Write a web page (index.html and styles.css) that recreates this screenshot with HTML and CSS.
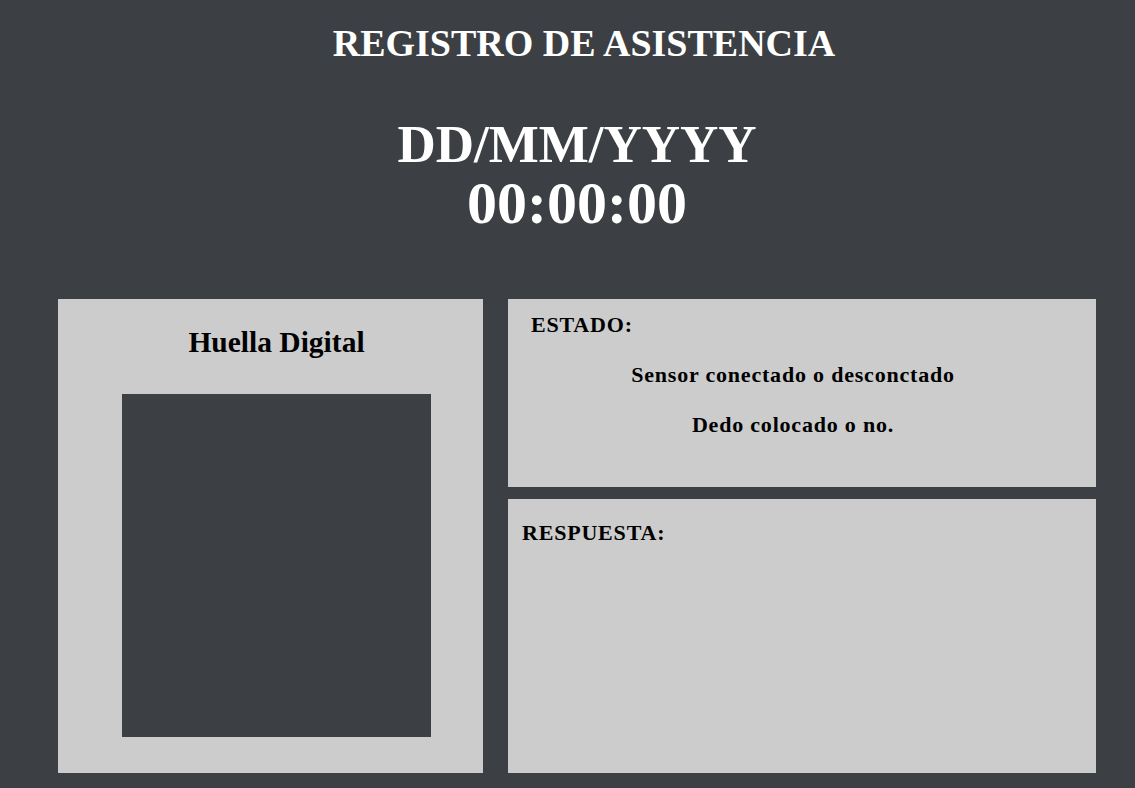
FILE: index.html
```html
<!DOCTYPE html>
<html lang="es">
<head>
<meta charset="utf-8">
<title>Registro de Asistencia</title>
<link rel="stylesheet" href="styles.css">
</head>
<body>
<div class="page">
  <header class="header">
    <h1 class="title">REGISTRO DE ASISTENCIA</h1>
    <div class="clock">
      <div class="date">DD/MM/YYYY</div>
      <div class="time">00:00:00</div>
    </div>
  </header>
  <main class="panels">
    <section class="panel finger">
      <h2 class="finger-title">Huella Digital</h2>
      <div class="finger-box"></div>
    </section>
    <div class="side">
      <section class="panel status">
        <h3 class="label">ESTADO:</h3>
        <p class="status-line">Sensor conectado o desconctado</p>
        <p class="status-line">Dedo colocado o no.</p>
      </section>
      <section class="panel response">
        <h3 class="label">RESPUESTA:</h3>
      </section>
    </div>
  </main>
</div>
</body>
</html>
```

FILE: styles.css
```css
html, body {
  margin: 0;
  padding: 0;
  background: #3c3f43;
}

body {
  font-family: "Liberation Serif", "Times New Roman", serif;
  color: #000;
  width: 1135px;
  height: 788px;
  overflow: hidden;
}

.page {
  padding: 0 39px 0 58px;
}

.header {
  text-align: center;
  color: #fff;
}

.title {
  margin: 21px 0 0;
  padding-left: 14px;
  font-size: 38px;
  line-height: 44px;
  font-weight: bold;
}

.clock {
  margin-top: 48px;
  font-weight: bold;
}

.date {
  font-size: 53px;
  line-height: 62px;
}

.time {
  font-size: 60px;
  line-height: 56px;
}

.panels {
  margin-top: 68px;
  display: flex;
  gap: 25px;
  height: 474px;
}

.panel {
  background: #cccccc;
  box-sizing: border-box;
}

.finger {
  width: 425px;
  padding: 26px 52px 36px 64px;
  display: flex;
  flex-direction: column;
  align-items: center;
}

.finger-title {
  margin: 0;
  font-size: 29.5px;
  line-height: 34px;
  font-weight: bold;
}

.finger-box {
  margin-top: 35px;
  width: 309px;
  flex: 1;
  background: #3c3f43;
}

.side {
  width: 588px;
  display: flex;
  flex-direction: column;
  gap: 12px;
}

.label {
  margin: 0;
  font-size: 22px;
  line-height: 26px;
  font-weight: bold;
  letter-spacing: 0.8px;
}

.status {
  height: 188px;
  padding: 13px 41px 0 23px;
}

.status-line {
  margin: 24px 0 0;
  text-align: center;
  font-size: 22px;
  line-height: 26px;
  font-weight: bold;
  letter-spacing: 0.8px;
}

.response {
  flex: 1;
  padding: 21px 14px 0 14px;
}
```
